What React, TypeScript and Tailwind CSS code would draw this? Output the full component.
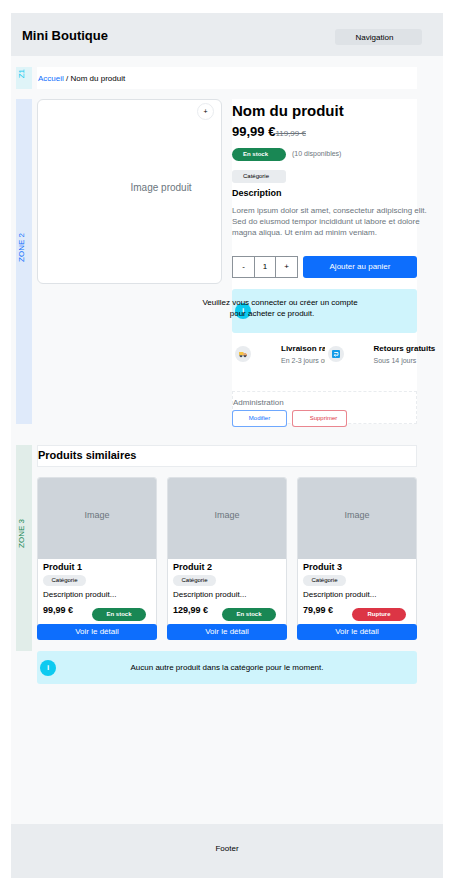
import type { ReactNode } from "react";

type Product = { name: string; price: string; inStock: boolean };

const products: Product[] = [
  { name: "Produit 1", price: "99,99 €", inStock: true },
  { name: "Produit 2", price: "129,99 €", inStock: true },
  { name: "Produit 3", price: "79,99 €", inStock: false },
];

function Zone({ label, tone, tabHeight, children }: { label: string; tone: string; tabHeight: string; children: ReactNode }) {
  return (
    <section className="flex gap-[5px]">
      <div className={`w-4 shrink-0 ${tabHeight} ${tone}`}>
        <div className="flex h-1/2 items-end">
          <span className="rotate-180 pr-px text-[8px] leading-[10px] whitespace-nowrap [writing-mode:vertical-rl]">{label}</span>
        </div>
      </div>
      <div className="min-w-0 flex-1">{children}</div>
    </section>
  );
}

function InfoDot() {
  return (
    <span className="flex size-4 shrink-0 items-center justify-center rounded-full bg-[#0dcaf0] text-[8px] font-bold leading-none text-white">i</span>
  );
}

function TruckIcon() {
  return (
    <svg viewBox="0 0 16 16" className="size-2" aria-hidden="true">
      <path d="M0 4h9v7H0z" fill="#f6c343" />
      <path d="M9 6h4l3 3v3H9z" fill="#f08a3c" />
      <path d="M10.500 7h2l1.500 2h-3.500z" fill="#bfe6fa" />
      <path d="M0 11h16v1.500H0z" fill="#6b7280" />
      <circle cx="4" cy="12.500" r="2" fill="#374151" />
      <circle cx="12" cy="12.500" r="2" fill="#374151" />
    </svg>
  );
}

function ReturnIcon() {
  return (
    <svg viewBox="0 0 16 16" className="size-2" aria-hidden="true">
      <rect width="16" height="16" rx="2" fill="#149ce8" />
      <path d="M4.500 5H12v5.500H4.500M7 8 4.500 10.500 7 13" fill="none" stroke="#fff" strokeWidth="1.800" />
    </svg>
  );
}

function Perk({ icon, title, text, clipped }: { icon: ReactNode; title: string; text: string; clipped?: boolean }) {
  return (
    <li className={`flex min-w-0 gap-[30px] pl-[3px] ${clipped ? "overflow-hidden" : ""}`}>
      <span className="mt-[3px] flex size-4 shrink-0 items-center justify-center rounded-full bg-[#e9ecef]">{icon}</span>
      <div className="whitespace-nowrap">
        <p className="text-[8px] leading-[11px] font-bold">{title}</p>
        <p className="mt-px text-[7px] leading-[11px] text-[#6c757d]">{text}</p>
      </div>
    </li>
  );
}

function ProductCard({ product }: { product: Product }) {
  return (
    <article className="flex min-w-0 flex-col rounded-[3px] border border-[#dee2e6] bg-white">
      <div className="flex h-[81px] items-center justify-center rounded-t-[2px] bg-[#ced4da] pb-[6px] text-[9px] text-[#6c757d]">Image</div>
      <div className="flex flex-col items-start px-[5px] pt-[3px]">
        <h3 className="text-[9px] leading-[11px] font-bold">{product.name}</h3>
        <span className="mt-[2px] flex h-[11px] w-[43px] items-center justify-center rounded-full bg-[#e9ecef] text-[6px]">Catégorie</span>
        <p className="mt-[3px] text-[8px] leading-[11px] whitespace-nowrap">Description produit...</p>
        <div className="mt-[4px] flex w-full justify-between pr-[5px]">
          <span className="text-[9px] leading-[12px] font-bold">{product.price}</span>
          <span className={`mt-[4px] mb-[3px] flex h-[13px] w-[54px] items-center justify-center rounded-full text-[6px] font-bold text-white ${product.inStock ? "bg-[#198754]" : "bg-[#dc3545]"}`}>
            {product.inStock ? "En stock" : "Rupture"}
          </span>
        </div>
      </div>
      <button type="button" className="-mx-px -mb-px h-4 rounded-[3px] bg-[#0d6efd] text-[8px] leading-4 text-white">Voir le détail</button>
    </article>
  );
}

export default function App() {
  return (
    <div className="flex min-h-screen bg-white pt-[13px] pr-[14px] pb-[5px] pl-[11px] font-['Liberation_Sans',Arial,sans-serif] text-[8px] text-black">
      <div className="flex min-w-0 flex-1 flex-col bg-[#f8f9fa]">
        <header className="flex h-[43px] items-center justify-between bg-[#e9ecef] pr-[21px] pl-[11px]">
          <p className="pt-[2px] text-[13px] leading-4 font-bold">Mini Boutique</p>
          <nav className="mt-[5px] flex h-4 w-[87px] items-center justify-center rounded-[3px] bg-[#dee2e6] pt-px pr-2">Navigation</nav>
        </header>

        <main className="flex flex-1 flex-col pt-[11px] pr-[26px] pl-[5px]">
          <Zone label="Z1" tone="bg-[#0dcaf0]/10 text-[#0dcaf0]" tabHeight="h-[22px]">
            <nav className="flex h-[22px] items-center bg-white pt-px pl-px" aria-label="Fil d'Ariane">
              <a href="#" className="text-[#0d6efd]">Accueil</a>
              <span className="whitespace-pre"> / Nom du produit</span>
            </nav>
          </Zone>

          <div className="mt-[10px]">
            <Zone label="ZONE 2" tone="bg-[#0d6efd]/10 text-[#0d6efd]" tabHeight="h-[325px]">
              <div className="grid grid-cols-2 items-start gap-[10px]">
                <div className="relative flex h-[185px] items-center rounded-[6px] border border-[#dee2e6] bg-white pb-2 pl-[50%] text-[10px] whitespace-nowrap text-[#6c757d]">
                  Image produit
                  <button type="button" aria-label="Agrandir" className="absolute top-[3px] right-[7px] flex size-[17px] items-center justify-center rounded-full border border-[#e9ecef] bg-white text-[7px] leading-none text-black">+</button>
                </div>

                <div className="flex h-[325px] min-w-0 flex-col bg-white">
                  <h1 className="mt-[3px] text-[15px] leading-[18px] font-bold">Nom du produit</h1>
                  <p className="mt-[4px] flex h-4 items-baseline leading-4">
                    <span className="text-[13px] font-bold">99,99 €</span>
                    <s className="text-[8px] text-[#6c757d]">119,99 €</s>
                  </p>
                  <p className="mt-[8px] flex h-[13px] items-center gap-[6px]">
                    <span className="flex h-[13px] w-[54px] items-center rounded-full bg-[#198754] pl-[11px] text-[6px] font-bold text-white">En stock</span>
                    <span className="text-[7px] text-[#6c757d]">(10 disponibles)</span>
                  </p>
                  <span className="mt-[9px] flex h-[13px] w-[54px] items-center rounded-[3px] bg-[#e9ecef] pl-[11px] text-[6px]">Catégorie</span>
                  <h2 className="mt-[5px] text-[9px] leading-[11px] font-bold">Description</h2>
                  <p className="mt-[6px] leading-[11px] whitespace-nowrap text-[#6c757d]">
                    Lorem ipsum dolor sit amet, consectetur adipiscing elit.
                    <br />
                    Sed do eiusmod tempor incididunt ut labore et dolore
                    <br />
                    magna aliqua. Ut enim ad minim veniam.
                  </p>

                  <div className="mt-[18px] flex h-[22px] gap-[5px]">
                    <div className="flex w-[66px] shrink-0 border border-[#8b9299]">
                      <button type="button" aria-label="Diminuer" className="flex-1">-</button>
                      <input aria-label="Quantité" defaultValue="1" className="w-[22px] border-x border-[#8b9299] text-center" />
                      <button type="button" aria-label="Augmenter" className="flex-1">+</button>
                    </div>
                    <button type="button" className="flex-1 rounded-[3px] bg-[#0d6efd] text-white">Ajouter au panier</button>
                  </div>

                  <div className="relative mt-[11px] flex h-[44px] items-center rounded-[3px] bg-[#cff4fc] pl-[3px]">
                    <InfoDot />
                    <p className="absolute top-[8px] -left-[30px] w-[156px] text-center leading-[11px] whitespace-nowrap">
                      Veuillez vous connecter ou créer un compte
                      <span className="block pr-4">pour acheter ce produit.</span>
                    </p>
                  </div>

                  <ul className="mt-[10px] grid h-[48px] grid-cols-2">
                    <Perk icon={<TruckIcon />} title="Livraison rapide" text="En 2-3 jours ouvrés" clipped />
                    <Perk icon={<ReturnIcon />} title="Retours gratuits" text="Sous 14 jours" />
                  </ul>

                  <div className="h-[33px] border border-dashed border-[#e9ecef] pt-[5px]">
                    <p className="leading-[11px] text-[#6c757d]">Administration</p>
                    <div className="-ml-px mt-[2px] flex gap-[5px] text-[6px]">
                      <button type="button" className="h-[17px] w-[55px] rounded-[3px] border border-[#0d6efd]/60 bg-white text-[#0d6efd]">Modifier</button>
                      <button type="button" className="h-[17px] w-[55px] rounded-[3px] border border-[#dc3545]/60 bg-white pl-2 text-[#dc3545]">Supprimer</button>
                    </div>
                  </div>
                </div>
              </div>
            </Zone>
          </div>

          <div className="mt-[21px]">
            <Zone label="ZONE 3" tone="bg-[#198754]/10 text-[#198754]" tabHeight="h-[206px]">
              <h2 className="h-[22px] border border-[#e9ecef] bg-white text-[11px] leading-[19px] font-bold">Produits similaires</h2>
              <div className="mt-[10px] grid grid-cols-3 gap-[10px]">
                {products.map((product) => (
                  <ProductCard key={product.name} product={product} />
                ))}
              </div>
              <div className="mt-[11px] flex h-[33px] items-center rounded-[3px] bg-[#cff4fc] pl-[3px]">
                <InfoDot />
                <p className="flex-1 pr-[19px] text-center">Aucun autre produit dans la catégorie pour le moment.</p>
              </div>
            </Zone>
          </div>
        </main>

        <footer className="flex h-[54px] items-center justify-center bg-[#e9ecef] pb-[5px]">Footer</footer>
      </div>
    </div>
  );
}
